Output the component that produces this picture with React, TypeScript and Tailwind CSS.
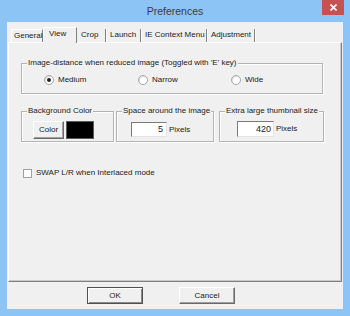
import React from 'react';

const tabs = [
  { label: 'General', w: 'w-[32px]' },
  { label: 'View', w: 'w-[34px]' },
  { label: 'Crop', w: 'w-[29px]' },
  { label: 'Launch', w: 'w-[35px]' },
  { label: 'IE Context Menu', w: 'w-[66px]' },
  { label: 'Adjustment', w: 'w-[48px]' },
];

const Radio: React.FC<{ checked?: boolean; label: string; w: string }> = ({ checked, label, w }) => (
  <div className={`flex items-center ${w}`}>
    <span className="w-[10px] h-[10px] rounded-full bg-white border border-[#a6a6a6] flex items-center justify-center shadow-[inset_1px_1px_0_#e0e0e0]">
      {checked && <span className="w-[4px] h-[4px] rounded-full bg-[#222]" />}
    </span>
    <span className="ml-[4px]">{label}</span>
  </div>
);

const Group: React.FC<{ label: string; className: string; children?: React.ReactNode }> = ({ label, className, children }) => (
  <div className={`relative border border-[#b4b4b4] shadow-[1px_1px_0_#fff,inset_1px_1px_0_#fff] ${className}`}>
    <span className="absolute left-[5px] top-[-6px] bg-[#f0f0f0] px-[1px] leading-[10px] whitespace-nowrap">
      {label}
    </span>
    {children}
  </div>
);

const Button: React.FC<{ label: string; isDefault?: boolean }> = ({ label, isDefault }) => (
  <div
    className={`w-[56px] h-[17px] flex items-center justify-center bg-[#f0f0f0] border ${
      isDefault
        ? 'border-[#505050] shadow-[inset_1px_1px_0_#fff,inset_-1px_-1px_0_#8a8a8a]'
        : 'border-t-white border-l-white border-b-[#696969] border-r-[#696969] shadow-[inset_-1px_-1px_0_#a0a0a0]'
    }`}
  >
    {label}
  </div>
);

export default function App() {
  return (
    <div className="w-[350px] h-[316px] bg-[#8cc4f5] flex flex-col font-['Liberation_Sans',Arial,sans-serif] text-[8px] text-[#1a1a1a]">
      {/* title bar */}
      <div className="h-[22px] flex shrink-0">
        <div className="w-[28px]" />
        <div className="flex-1 text-center text-[10.5px] leading-[22px] text-[#3c3c3c] pb-[1px]">Preferences</div>
        <div className="w-[22px] h-[15px] bg-[#c75050] flex items-center justify-center">
          <svg width="7" height="7" viewBox="0 0 7 7">
            <path d="M0.5 0.5 L6.5 6.5 M6.5 0.5 L0.5 6.5" stroke="#fff" strokeWidth="1.6" />
          </svg>
        </div>
        <div className="w-[6px]" />
      </div>

      {/* client */}
      <div className="mx-[7px] h-[287px] bg-[#f0f0f0] flex flex-col shrink-0">
        {/* tabs */}
        <div className="h-[20px] pl-[4px] flex items-end shrink-0">
          {tabs.map((t, i) =>
            i === 1 ? (
              <div
                key={t.label}
                className={`${t.w} h-[16px] -mb-[1px] relative z-10 bg-[#f0f0f0] border-t border-l border-white border-r border-r-[#808080] pl-[5px] pt-[1px] leading-[10px]`}
              >
                {t.label}
              </div>
            ) : (
              <div
                key={t.label}
                className={`${t.w} h-[13px] border-r border-[#808080] shadow-[1px_0_0_#fff] ${
                  i === 0 ? 'border-t border-t-white border-l border-l-white pl-[2px]' : 'pl-[4px]'
                } pt-[1px] leading-[10px] whitespace-nowrap`}
              >
                {t.label}
              </div>
            )
          )}
        </div>

        {/* panel */}
        <div className="ml-[1px] w-[334px] h-[240px] shrink-0 border-t border-l border-white border-r border-b border-r-[#808080] border-b-[#808080] shadow-[inset_-1px_-1px_0_#c8c8c8] pt-[20px] pl-[12px]">
          <Group label="Image-distance when reduced image (Toggled with 'E' key)" className="w-[302px] h-[31px]">
            <div className="mt-[10px] h-[12px] flex items-center pl-[22px]">
              <Radio checked label="Medium" w="w-[94px]" />
              <Radio label="Narrow" w="w-[93px]" />
              <Radio label="Wide" w="w-[80px]" />
            </div>
          </Group>

          <div className="mt-[17px] flex">
            <Group label="Background Color" className="w-[93px] h-[31px]">
              <div className="mt-[9px] ml-[11px] flex">
                <div className="w-[31px] h-[18px] flex items-center justify-center border border-t-white border-l-white border-b-[#696969] border-r-[#696969] shadow-[inset_-1px_-1px_0_#a0a0a0]">
                  Color
                </div>
                <div className="ml-[2px] w-[28px] h-[18px] bg-black border border-[#5a5a5a]" />
              </div>
            </Group>
            <Group label="Space around the image" className="ml-[2px] w-[98px] h-[31px]">
              <div className="mt-[10px] ml-[14px] flex items-center">
                <div className="w-[36px] h-[15px] bg-white border border-t-[#7a7a7a] border-l-[#7a7a7a] border-b-[#e3e3e3] border-r-[#e3e3e3] text-right pr-[3px] leading-[13px] text-[9px]">
                  5
                </div>
                <span className="ml-[2px]">Pixels</span>
              </div>
            </Group>
            <Group label="Extra large thumbnail size" className="ml-[5px] w-[105px] h-[31px]">
              <div className="mt-[9px] ml-[17px] flex items-center">
                <div className="w-[37px] h-[16px] bg-white border border-t-[#7a7a7a] border-l-[#7a7a7a] border-b-[#e3e3e3] border-r-[#e3e3e3] text-right pr-[2px] leading-[14px] text-[9px]">
                  420
                </div>
                <span className="ml-[2px]">Pixels</span>
              </div>
            </Group>
          </div>

          <div className="mt-[25px] ml-[2px] flex items-center">
            <span className="w-[9px] h-[9px] bg-white border border-[#a0a0a0]" />
            <span className="ml-[4px]">SWAP L/R when Interlaced mode</span>
          </div>
        </div>

        {/* buttons */}
        <div className="mt-[5px] pl-[80px] flex gap-[36px]">
          <Button label="OK" isDefault />
          <Button label="Cancel" />
        </div>
      </div>
    </div>
  );
}
